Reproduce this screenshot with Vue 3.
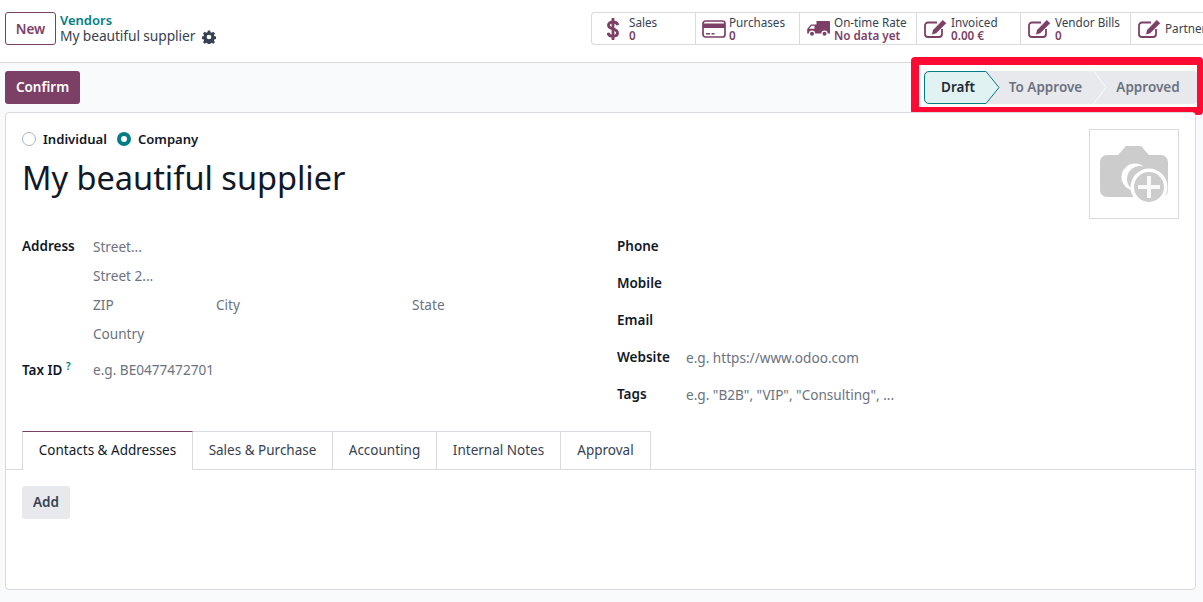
<script setup>
const stats = [
  { icon: 'dollar', label: 'Sales', value: '0', w: 104 },
  { icon: 'card', label: 'Purchases', value: '0', w: 104 },
  { icon: 'truck', label: 'On-time Rate', value: 'No data yet', w: 117 },
  { icon: 'edit', label: 'Invoiced', value: '0.00 €', w: 104 },
  { icon: 'edit', label: 'Vendor Bills', value: '0', w: 110 },
  { icon: 'edit', label: 'Partner Ledger', value: '', w: 104 },
]
const tabs = [
  { label: 'Contacts & Addresses', w: 171, active: true },
  { label: 'Sales & Purchase', w: 140 },
  { label: 'Accounting', w: 104 },
  { label: 'Internal Notes', w: 124 },
  { label: 'Approval', w: 90 },
]
</script>

<template>
  <div class="page">
    <header class="topbar">
      <div class="crumbs">
        <button class="btn-new">New</button>
        <div class="crumb-text">
          <div class="crumb-link">Vendors</div>
          <div class="crumb-cur">
            <span>My beautiful supplier</span>
            <svg class="gear" viewBox="0 0 24 24" width="14" height="14">
              <path fill="#374151" fill-rule="evenodd" d="M10 1h4l.6 3 2.200 .9 2.600-1.700 2.800 2.800-1.700 2.600.9 2.200 3 .6v4l-3 .6-.9 2.200 1.700 2.600-2.800 2.800-2.600-1.700-2.200.9-.6 3h-4l-.6-3-2.200-.9-2.600 1.700-2.800-2.800 1.700-2.600-.9-2.200-3-.6v-4l3-.6.9-2.200-1.700-2.600 2.800-2.800 2.600 1.700 2.200-.9zM12 8a4 4 0 1 0 0 8 4 4 0 0 0 0-8z"/>
            </svg>
          </div>
        </div>
      </div>
      <div class="stats">
        <div v-for="s in stats" :key="s.label" class="stat" :style="{ width: s.w + 'px' }">
          <div class="ic-box">
            <svg v-if="s.icon === 'dollar'" viewBox="0 0 12 22" width="12" height="22">
              <path fill="none" stroke="#7c3f66" stroke-width="2.900" d="M10.800 7C10.200 4.900 8.300 4 6 4 3.200 4 1.500 5.300 1.500 7.200c0 4.600 9 2.700 9 7.700 0 2-1.900 3.200-4.500 3.200-2.600 0-4.500-1.100-5-3.300"/>
              <path fill="#7c3f66" d="M4.600 0h2.800v22H4.600z"/>
            </svg>
            <svg v-else-if="s.icon === 'card'" viewBox="0 0 24 18" width="24" height="18">
              <rect x="1" y="1" width="22" height="16" rx="2.500" fill="none" stroke="#7c3f66" stroke-width="1.700"/>
              <path fill="#7c3f66" d="M1 3.500h22V8H1zM4 13h4v1.500H4zM9.500 13h3v1.500h-3z"/>
            </svg>
            <svg v-else-if="s.icon === 'truck'" viewBox="0 0 23 16" width="23" height="16">
              <path fill="#7c3f66" d="M9.500 0H22a1 1 0 0 1 1 1v11.500H.2V8L4 3.500h5.500z"/>
              <path fill="#fff" d="M2 7.800 4.700 4.800H7.500v3z"/>
              <circle cx="5" cy="12.700" r="3.200" fill="#fff"/><circle cx="5" cy="12.700" r="2" fill="#7c3f66"/>
              <circle cx="17.500" cy="12.700" r="3.200" fill="#fff"/><circle cx="17.500" cy="12.700" r="2" fill="#7c3f66"/>
            </svg>
            <svg v-else viewBox="0 0 23 19" width="23" height="19">
              <path d="M13 3.500H4A3 3 0 0 0 1 6.500v8.500a3 3 0 0 0 3 3h11a3 3 0 0 0 3-3v-5" fill="none" stroke="#7c3f66" stroke-width="1.800"/>
              <path fill="#7c3f66" stroke="#fff" stroke-width=".8" d="M18.800 .6 22.600 4.200 12 14.800 7.500 16l1.100-4.900z"/>
            </svg>
          </div>
          <div class="stat-text">
            <div class="stat-label">{{ s.label }}</div>
            <div v-if="s.value" class="stat-value">{{ s.value }}</div>
          </div>
        </div>
      </div>
    </header>

    <div class="actions">
      <button class="btn-confirm">Confirm</button>
      <div class="status">
        <div class="highlight"></div>
        <div class="track">
          <div class="step current">
            <svg class="step-shape" viewBox="0 0 76 33" width="76" height="33">
              <path d="M5 .5H62L75 16.500 62 32.500H5A4.500 4.500 0 0 1 .5 28V5A4.500 4.500 0 0 1 5 .5z" fill="#e0f2f1" stroke="#017e84"/>
            </svg>
            <span>Draft</span>
          </div>
          <div class="step next">
            <span>To Approve</span>
            <svg class="step-sep" viewBox="0 0 14 33" width="14" height="33">
              <path d="M.5 0 13 16.500 .5 33" fill="none" stroke="#f5f6f8" stroke-width="1.200"/>
            </svg>
          </div>
          <div class="step last"><span>Approved</span></div>
        </div>
      </div>
    </div>

    <main class="card">
      <div class="head">
        <div class="head-main">
          <div class="radios">
            <label class="radio"><i class="dot"></i>Individual</label>
            <label class="radio"><i class="dot on"></i>Company</label>
          </div>
          <h1>My beautiful supplier</h1>
        </div>
        <div class="avatar">
          <svg class="cam" viewBox="0 0 68 60" width="68" height="60">
            <path fill="#cccccc" d="M7 9h11l8-9h15l8 9h12a7 7 0 0 1 7 7v28a7 7 0 0 1-7 7H7a7 7 0 0 1-7-7V16a7 7 0 0 1 7-7z"/>
            <circle cx="35" cy="31" r="13.500" fill="#fff"/>
            <circle cx="40" cy="33" r="13" fill="#cccccc"/>
            <circle cx="49" cy="41" r="18.500" fill="#fff"/>
            <circle cx="49" cy="41" r="15" fill="#cccccc"/>
            <path fill="#fff" d="M47 30h4v9h9v4h-9v9h-4v-9h-9v-4h9z" opacity=".9"/>
          </svg>
        </div>
      </div>

      <div class="columns">
        <div class="col-left">
          <div class="row-address">
            <div class="lbl">Address</div>
            <div class="addr">
              <div class="ph">Street...</div>
              <div class="ph">Street 2...</div>
              <div class="addr-line">
                <span class="ph zip">ZIP</span><span class="ph city">City</span><span class="ph">State</span>
              </div>
              <div class="ph">Country</div>
            </div>
          </div>
          <div class="row-tax">
            <div class="lbl">Tax ID <sup class="help">?</sup></div>
            <div class="ph">e.g. BE0477472701</div>
          </div>
        </div>
        <div class="col-right">
          <div class="rrow"><div class="lbl">Phone</div></div>
          <div class="rrow"><div class="lbl">Mobile</div></div>
          <div class="rrow"><div class="lbl">Email</div></div>
          <div class="rrow"><div class="lbl">Website</div><div class="ph">e.g. https://www.odoo.com</div></div>
          <div class="rrow"><div class="lbl">Tags</div><div class="ph">e.g. "B2B", "VIP", "Consulting", ...</div></div>
        </div>
      </div>

      <nav class="tabs">
        <div v-for="t in tabs" :key="t.label" class="tab" :class="{ active: t.active }" :style="{ width: t.w + 'px' }"><span>{{ t.label }}</span></div>
      </nav>
      <div class="tab-body">
        <button class="btn-add">Add</button>
      </div>
    </main>
  </div>
</template>

<style>
html, body { margin: 0; background: #fff; }
</style>

<style scoped>
.page {
  width: 1203px; height: 602px; overflow: hidden; background: #f9fafb;
  font-family: "Noto Sans", "Open Sans", sans-serif; font-size: 13.500px; color: #374151;
  display: flex; flex-direction: column;
}
button { font-family: inherit; cursor: pointer; }
.topbar {
  height: 62px; flex: none; background: #fff;
  border-bottom: 1px solid #d8dadd; display: flex; justify-content: space-between; padding-left: 5px;
}
.crumbs { display: flex; align-items: flex-start; padding-top: 12px; gap: 4px; }
.btn-new {
  width: 51px; height: 33px; border: 1px solid #7c3f66; border-radius: 3px; background: #fff;
  color: #7c3f66; font-weight: 600; font-size: 13.500px; padding: 0;
}
.crumb-text { line-height: 16px; margin-top: -1px; }
.crumb-link { color: #017e84; font-weight: 600; font-size: 13px; margin-top: 1px; }
.crumb-cur { display: flex; align-items: center; gap: 7px; font-size: 13.800px; letter-spacing: -.1px; }
.crumb-cur span { color: #374151; }
.gear { display: block; margin-top: 1px; }
.stats {
  display: flex; align-self: flex-start; margin-top: 12px; height: 33px; box-sizing: border-box; flex: none;
  border: 1px solid #d8dadd; border-right: 0; border-radius: 4px 0 0 4px; width: 612px; overflow: hidden;
}
.stat {
  flex: none; box-sizing: border-box; border-right: 1px solid #d8dadd; display: flex; align-items: center;
  padding-left: 7px; height: 100%;
}
.stat:first-child { padding-left: 9px; }
.stat:nth-child(2) { padding-left: 6px; }
.ic-box { width: 27px; flex: none; display: flex; }
.ic-box svg { display: block; }
.stat:first-child .ic-box { width: 28px; padding-left: 6px; box-sizing: border-box; }
.stat-text { font-size: 11.700px; line-height: 13px; white-space: nowrap; }
.stat-label { color: #374151; }
.stat-value { color: #7c3f66; font-weight: 600; }
.actions {
  height: 49px; flex: none; display: flex; justify-content: space-between; align-items: flex-start;
  padding: 8px 6px 0 5px; box-sizing: border-box;
}
.btn-confirm {
  width: 75px; height: 33px; border: 0; border-radius: 3px; background: #7c3f66; color: #fff;
  font-weight: 600; font-size: 13.500px; padding: 0 0 2px;
}
.status {
  position: relative; height: 33px; width: 273px;
  font-weight: 600; font-size: 13.500px; color: #6b7280;
}
.highlight {
  position: absolute; left: -13px; top: -14px; right: -6px; bottom: -11px; box-sizing: border-box;
  border: 8px solid #ff0a33; border-right-width: 6px; border-radius: 4px; background: #fff;
}
.track { position: relative; display: flex; height: 33px; background: #e7e9ed; border-radius: 3px; }
.step { position: relative; height: 33px; display: flex; align-items: center; justify-content: center; box-sizing: border-box; padding-bottom: 2px; }
.step span { position: relative; }
.step-shape { position: absolute; left: 0; top: 0; }
.step-sep { position: absolute; right: -13px; top: 0; }
.current { width: 68px; color: #1f2937; }
.next { width: 102px; padding-left: 5px; }
.last { width: 103px; padding-left: 5px; }
.card {
  width: 1191px; height: 478px; margin-left: 5px; box-sizing: border-box; background: #fff;
  border: 1px solid #d8dadd; border-radius: 4px; position: relative;
}
.head { display: flex; justify-content: space-between; padding: 16px 16px 0 16px; height: 106px; box-sizing: border-box; }
.radios { display: flex; gap: 10px; height: 20px; align-items: center; }
.radio { display: flex; align-items: center; gap: 7px; font-weight: 600; color: #111827; font-size: 13.100px; }
.dot { width: 14px; height: 14px; box-sizing: border-box; border: 1px solid #adb5bd; border-radius: 50%; background: #fff; }
.dot.on { border: 4px solid #017e84; }
h1 { margin: 6px 0 0; font-size: 32.500px; line-height: 46px; font-weight: 400; color: #111827; }
.avatar {
  width: 90px; height: 90px; box-sizing: border-box; border: 1px solid #d8dadd; display: flex; align-items: center; justify-content: center;
}
.cam { margin-top: 4px; }
.columns { display: flex; padding: 17px 16px 0; height: 212px; box-sizing: border-box; }
.col-left { width: 595px; flex: none; padding-top: 1px; }
.col-right { flex: 1; }
.lbl { font-weight: 600; color: #111827; width: 70px; flex: none; }
.ph { color: #6b7280; font-size: 13.600px; }
.row-address { display: flex; }
.addr { width: 430px; padding-left: 1px; }
.addr > div { height: 29px; line-height: 20px; }
.addr-line { display: flex; }
.zip { width: 123px; }
.city { width: 196px; }
.row-tax { display: flex; margin-top: 7px; line-height: 20px; }
.row-tax .ph { padding-left: 1px; }
.help { color: #017e84; font-size: 10px; line-height: 0; }
.rrow { display: flex; height: 37px; line-height: 20px; }
.rrow .lbl { width: 69px; }
.rrow .ph { margin-top: 1px; }
.tabs {
  display: flex; padding-left: 16px; height: 39px; box-sizing: border-box; border-bottom: 1px solid #d8dadd;
}
.tab {
  box-sizing: border-box; height: 39px; border: 1px solid #d8dadd; border-left: 0; display: flex; align-items: center; justify-content: center;
  color: #374151; background: #fff; padding-bottom: 2px;
}
.tab.active {
  border-left: 1px solid #d8dadd; border-top: 1px solid #7c3f66; border-bottom: 0; color: #111827; position: relative; z-index: 1;
}
.tab-body { padding: 16px; }
.btn-add {
  width: 48px; height: 33px; border: 0; border-radius: 3px; background: #e7e9ed; color: #374151; font-weight: 600; font-size: 13.500px; padding: 0 0 2px;
}
</style>
